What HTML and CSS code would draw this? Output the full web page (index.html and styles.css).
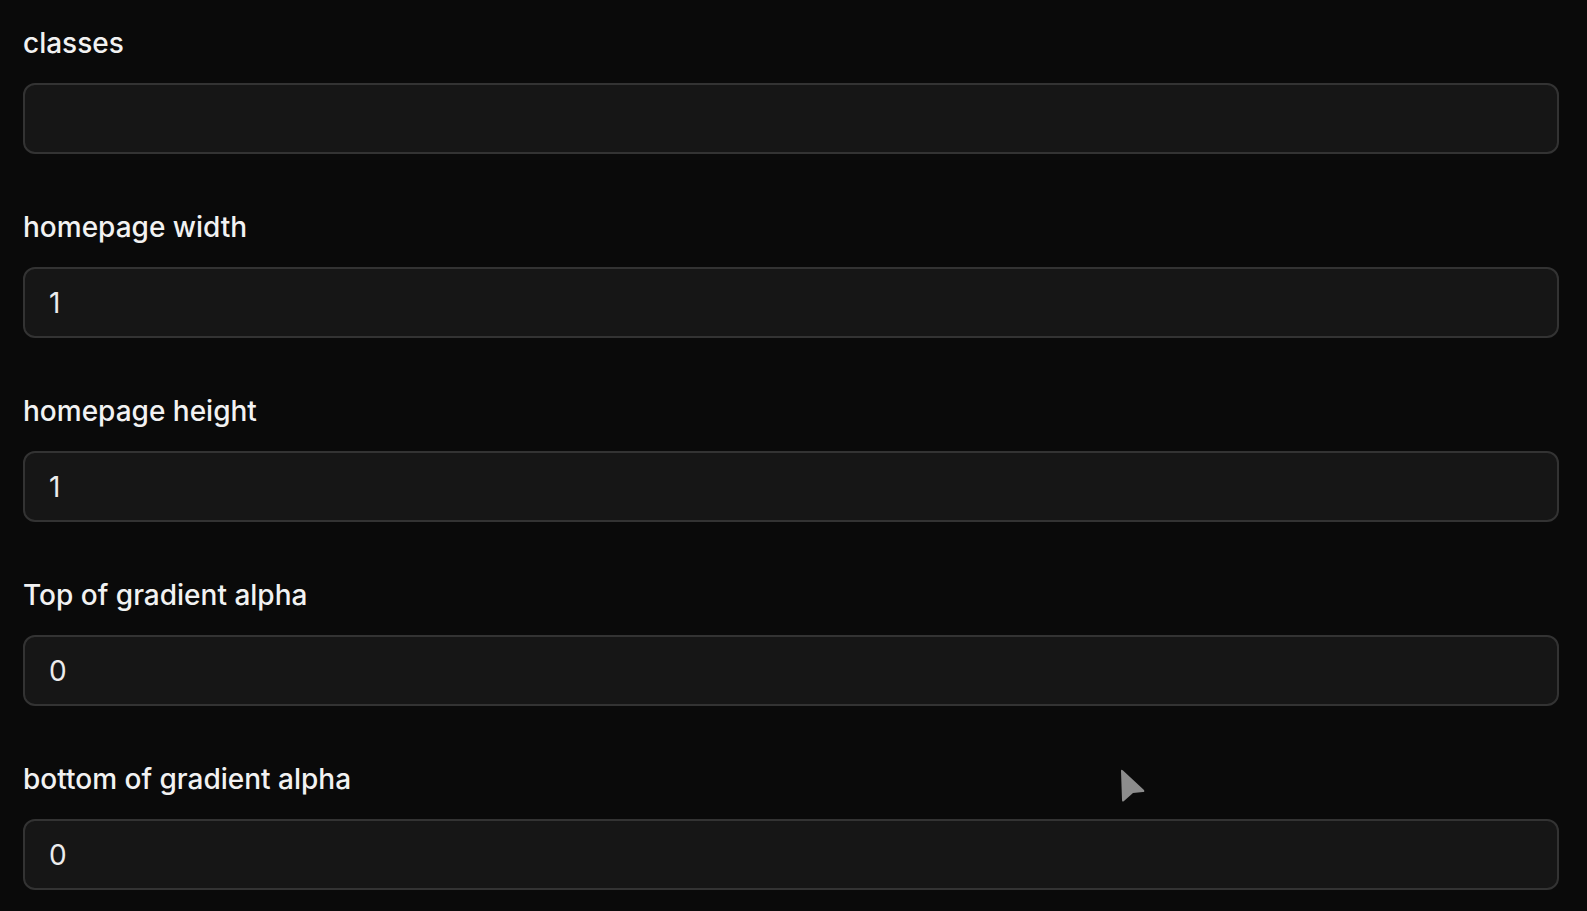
FILE: index.html
```html
<!DOCTYPE html>
<html lang="en">
<head>
    <meta charset="UTF-8">
    <meta name="viewport" content="width=device-width, initial-scale=1.0">
    <title>Settings</title>
    <link rel="stylesheet" href="styles.css">
</head>
<body>
    <div class="form">
        <div class="form-group">
            <label class="form-label" for="classes">classes</label>
            <input class="form-input" id="classes" type="text" value="">
        </div>
        <div class="form-group">
            <label class="form-label" for="hp-width">homepage width</label>
            <input class="form-input" id="hp-width" type="text" value="1">
        </div>
        <div class="form-group">
            <label class="form-label" for="hp-height">homepage height</label>
            <input class="form-input" id="hp-height" type="text" value="1">
        </div>
        <div class="form-group">
            <label class="form-label" for="top-alpha">Top of gradient alpha</label>
            <input class="form-input" id="top-alpha" type="text" value="0">
        </div>
        <div class="form-group">
            <label class="form-label" for="bottom-alpha">bottom of gradient alpha</label>
            <input class="form-input" id="bottom-alpha" type="text" value="0">
        </div>
    </div>

    <svg class="cursor" width="30" height="40" viewBox="0 0 30 40">
        <path d="M3 3 Q3 1 5 2.5 L26 22 Q27 24 25 24 L15 25 L6 33 Q4 34.5 4 32 Z" fill="#8c8c8c"/>
    </svg>
</body>
</html>
```

FILE: styles.css
```css
/* Formulaire sombre */
* {
    box-sizing: border-box;
}

body {
    margin: 0;
    padding: 23px;
    background-color: #0a0a0a;
    font-family: Inter, "Noto Sans", sans-serif;
    color: #f2f2f2;
    overflow: hidden;
}

.form {
    display: flex;
    flex-direction: column;
    gap: 53px;
}

.form-group {
    display: flex;
    flex-direction: column;
    gap: 20px;
}

.form-label {
    font-size: 28px;
    line-height: 41px;
    font-weight: 500;
    margin-bottom: -1px;
}

.form-input {
    width: 1536px;
    height: 71px;
    padding: 0 24px;
    background-color: #161616;
    border: 2px solid #333333;
    border-radius: 12px;
    color: #ececec;
    font-family: inherit;
    font-size: 28px;
    outline: none;
}

.cursor {
    position: absolute;
    left: 1118px;
    top: 768px;
}
```
